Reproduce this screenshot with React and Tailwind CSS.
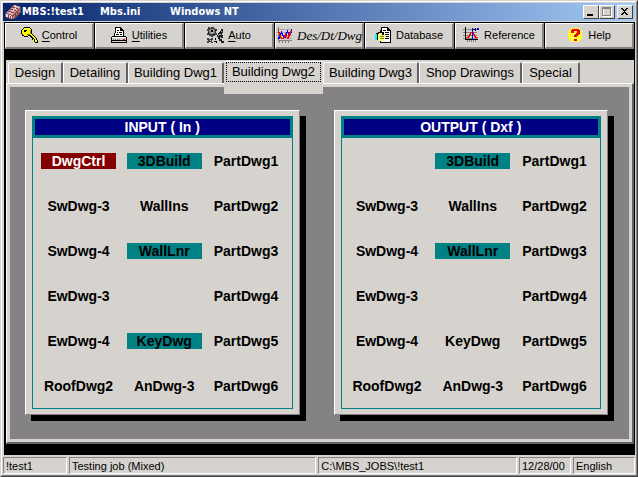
import React from "react";

const face = "bg-[#d6d3ce]";
const raised =
  "border border-t-white border-l-white border-r-[#848284] border-b-[#848284]";

function KeyIcon() {
  return (
    <svg width="17" height="17" viewBox="0 0 17 17" shapeRendering="crispEdges">
      <path d="M3 0h6v1h1v1h1v5l5 5v1h1v3h-3v-1h-1v-2h-2v-2L8 9H7v1H3V9H1V7H0V3h1V2h1V1h1z" fill="#000" />
      <path d="M3 1h6v1h1v5l5 5v1h1v2h-2v-2h-2v-2h-1L8 8H7v1H3V8H2V7H1V3h1V2h1z" fill="#ffff00" />
      <path d="M3 3h3v1H5v1H3zM9 8h1v1h1v1h1v1h1v1h1v1h-1v-1h-1v-1h-1v-1h-1V9H9z" fill="#000" />
      <path d="M9 3h1v4H9zM6 7h3v1H6z" fill="#848200" />
    </svg>
  );
}

function PrinterIcon() {
  return (
    <svg width="17" height="17" viewBox="0 0 17 17" shapeRendering="crispEdges">
      <path d="M4 0h6v1h1v1h1v1h1v6h2v1h1v6H0v-6h1V9h2V6h1z" fill="#000" />
      <path d="M5 1h4v3h3v5H4V6h1zM1 10h14v1H1z" fill="#fff" />
      <path d="M1 11h14v2H1zM1 14h14v1H1z" fill="#d6d3ce" />
      <path d="M2 12h1v1H2zM4 12h1v1H4zM6 12h1v1H6zM8 12h1v1H8z" fill="#848284" />
      <path d="M6 3h2v1H6zM6 5h1v1H6zM8 5h3v1H8zM5 7h3v1H5zM9 7h2v1H9z" fill="#000" />
      <path d="M12 12h2v1h-2z" fill="#f00" />
    </svg>
  );
}

function GearsIcon() {
  return (
    <svg width="17" height="17" viewBox="0 0 17 17" shapeRendering="crispEdges">
      <path d="M1 0h2v1h1V0h3v1h1v1h2v2H9v2h1v2H8v1H6v1H4V9H2V8H0V6h1V4H0V2h1z" fill="#424142" />
      <path d="M3 2h4v1h1v3H7v1H3V6H2V3h1z" fill="#848284" />
      <path d="M3 3h1v1H3zM6 3h1v1H6zM4 5h2v1H4z" fill="#d6d3ce" />
      <path d="M4 3h2v2H4zM1 5h1v1H1zM8 3h1v1H8zM6 7h1v1H6z" fill="#000" />
      <path d="M14 2h2v4h-1v2h1v3h-2v1h1v2h2v2h-3v-2h-2v-2h-1v-2h-1V8h1V6h1V5h1V4h1z" fill="#212021" />
      <path d="M14 4h1v1h-1zM12 7h2v1h-2zM13 10h1v2h-1zM11 8h1v1h-1z" fill="#adaaad" />
      <path d="M0 11h2v1h2v-1h2v2H5v2h1v1H4v-1H2v1H0v-2h1v-1H0z" fill="#424142" />
      <path d="M3 13h1v1H3z" fill="#d6d3ce" />
      <path d="M8 11h1v2H8zM7 14h3v2H9v-1H7z" fill="#000" />
    </svg>
  );
}

function ChartIcon() {
  return (
    <svg width="17" height="17" viewBox="0 0 17 17" shapeRendering="crispEdges">
      <path d="M0 2h16v1H0zM0 5h16v1H0zM0 8h16v1H0zM0 11h16v1H0z" fill="#adaaad" />
      <path d="M2 0h1v13H2zM2 13h14v1H2zM3 14h1v2H3zM6 14h1v2H6zM9 14h1v2H9zM12 14h1v2h-1z" fill="#848284" />
      <path d="M2 10h1V8h1V6h1V4h1v2h1v2h1v1h1V7h1V5h1V3h1v2h1v2h1V5h1V2h1v4h-1v2h-1v1h-1V8h-1V6h-1v3h-1v2H8v-1H7V9H6V7H5v3H4v2H2z" fill="#0000ff" />
      <path d="M2 3h1v2h1v3h1v2h1v1h1v-1h1V8h1V6h1v2h1v2h1V7h1V5h1V4h2v1h-1v2h-1v3h-1v2h-2v-2h-1v-1H9v2H8v1H5v-1H4V9H3V6H2z" fill="#ff0000" />
    </svg>
  );
}

function DatabaseIcon() {
  return (
    <svg width="17" height="17" viewBox="0 0 17 17" shapeRendering="crispEdges">
      <path d="M6 0h7v1h1v1h1v1h1v13H5v-3H1V6h2V5h2V3h1z" fill="#000" />
      <path d="M7 1h5v3h3v11H6v-2h3V5H7z" fill="#fff" />
      <path d="M10 5h4v1h-4zM10 7h4v1h-4zM10 9h4v1h-4zM10 11h4v1h-4zM8 3h3v1H8z" fill="#000" />
      <path d="M3 7h1V6h3v2h4v2H9v4H4v-1H3z" fill="#ffff84" />
      <path d="M5 9h4v1H5zM5 11h4v1H5z" fill="#848200" />
      <path d="M0 7h2v6H0z" fill="#00ffff" />
    </svg>
  );
}

function ReferenceIcon() {
  return (
    <svg width="17" height="17" viewBox="0 0 17 17" shapeRendering="crispEdges">
      <path d="M0 2h14v1H0zM0 5h14v1H0zM0 8h14v1H0zM0 11h14v1H0z" fill="#848284" />
      <path d="M2 0h1v13H2zM2 12h13v1H2z" fill="#000" />
      <path d="M4 13h1v2H4zM6 13h1v2H6zM8 13h1v2H8zM10 13h1v2h-1zM12 13h1v2h-1z" fill="#848284" />
      <path d="M3 10h2V9h1V7h1V5h4v2h1v2h1v1h2v1h-3v-1h-1V8h-1V6H8v2H7v2H6v1H3z" fill="#ff0000" />
      <path d="M9 1h1v11H9z" fill="#0000ff" />
      <path d="M10 2h3v1h-3zM12 1h1v3h-1z" fill="#000" />
      <path d="M14 1h2v2h-2z" fill="#0000ff" />
    </svg>
  );
}

function HelpIcon() {
  return (
    <svg width="17" height="17" viewBox="0 0 17 17" shapeRendering="crispEdges">
      <defs>
        <pattern id="dither" width="2" height="2" patternUnits="userSpaceOnUse">
          <path d="M0 0h2v2H0z" fill="#ffff00" />
          <path d="M0 0h1v1H0z" fill="#ffffbd" />
        </pattern>
      </defs>
      <circle cx="8" cy="8" r="7.5" fill="url(#dither)" />
      <path d="M4 3h1V2h7v1h1v4h-1v1h-1v1h-1v1H7V8h1V7h1V6h1V4H7v2H4zM7 12h3v2H7z" fill="#ff0000" />
      <path d="M7 9h3v1H7zM12 3h1v4h-1z" fill="#b50000" />
    </svg>
  );
}

function BrickIcon() {
  return (
    <svg width="17" height="16" viewBox="0 0 17 16" shapeRendering="crispEdges">
      <path d="M0 9L8 1h3l5 2v5l-7 7H5l-5-2z" fill="#845152" />
      <path d="M1 9l8-8 6 2-8 8z" fill="#ceb2b5" />
      <path d="M1 10l6 2v3l-6-2z" fill="#e7dbde" />
      <path d="M8 12l7-7v3l-7 6z" fill="#ad8284" />
      <path d="M3 7l6 2M5 5l6 2M7 3l6 2M3 11v3M5 12v3M10 10v3M12 8v3" stroke="#9c3039" />
      <path d="M5 8h1v1H5zM8 6h1v1H8zM10 4h1v1h-1zM10 2h1v1h-1z" fill="#efe3e7" />
    </svg>
  );
}

const tools = [
  { icon: KeyIcon, hot: "C", rest: "ontrol" },
  { icon: PrinterIcon, hot: "U", rest: "tilities" },
  { icon: GearsIcon, hot: "A", rest: "uto" },
  { icon: ChartIcon, hot: "", rest: "Des/Dt/Dwg", italic: true },
  { icon: DatabaseIcon, hot: "", rest: "Database" },
  { icon: ReferenceIcon, hot: "", rest: "Reference" },
  { icon: HelpIcon, hot: "", rest: "Help" },
];

const tabs = [
  { label: "Design", width: "w-[55px]" },
  { label: "Detailing", width: "w-[65px]" },
  { label: "Building Dwg1", width: "w-[96px]" },
  { label: "Building Dwg2", width: "w-[99px]", active: true },
  { label: "Building Dwg3", width: "w-[96px]" },
  { label: "Shop Drawings", width: "w-[103px]" },
  { label: "Special", width: "w-[58px]" },
];

const inputCells = [
  ["DwgCtrl", "red"], ["3DBuild", "teal"], ["PartDwg1"],
  ["SwDwg-3"], ["WallIns"], ["PartDwg2"],
  ["SwDwg-4"], ["WallLnr", "teal"], ["PartDwg3"],
  ["EwDwg-3"], [""], ["PartDwg4"],
  ["EwDwg-4"], ["KeyDwg", "teal"], ["PartDwg5"],
  ["RoofDwg2"], ["AnDwg-3"], ["PartDwg6"],
];

const outputCells = [
  [""], ["3DBuild", "teal"], ["PartDwg1"],
  ["SwDwg-3"], ["WallIns"], ["PartDwg2"],
  ["SwDwg-4"], ["WallLnr", "teal"], ["PartDwg3"],
  ["EwDwg-3"], [""], ["PartDwg4"],
  ["EwDwg-4"], ["KeyDwg"], ["PartDwg5"],
  ["RoofDwg2"], ["AnDwg-3"], ["PartDwg6"],
];

const tones = {
  red: "bg-[#840000] text-white",
  teal: "bg-[#008284]",
};

function TitleBar() {
  return (
    <header className="flex h-[18px] items-center bg-linear-to-r from-[#08246b] to-[#a5cbf7] px-[2px] font-['DejaVu_Sans_Condensed','DejaVu_Sans',sans-serif] text-[11px] font-bold text-white">
      <BrickIcon />
      <h1 className="flex flex-1 whitespace-pre">
        <span className="w-[78px]">MBS:!test1</span>
        <span className="w-[70px]">Mbs.ini</span>
        <span>Windows NT</span>
      </h1>
      <div className="flex">
        <CaptionButton label="Minimize">
          <path d="M3 8h6v2H3z" fill="#000" />
        </CaptionButton>
        <CaptionButton label="Maximize" disabled>
          <path d="M3 2h8v8H3z" fill="none" stroke="#fff" transform="translate(.5 .5)" />
          <path d="M2 1h8v8H2zM2 2h8" fill="none" stroke="#848284" transform="translate(.5 .5)" />
        </CaptionButton>
        <span className="w-[2px]" />
        <CaptionButton label="Close">
          <path d="M3 2h2v1h1v1h1V3h1V2h2v1H9v1H8v1H7v1h1v1h1v1h1v1H8V8H7V7H6v1H5v1H3V8h1V7h1V6h1V5H5V4H4V3H3z" fill="#000" />
        </CaptionButton>
      </div>
    </header>
  );
}

function CaptionButton({ label, disabled, children }) {
  return (
    <button
      aria-label={label}
      disabled={disabled}
      className={`${face} h-[14px] w-4 border border-t-white border-r-[#424142] border-b-[#424142] border-l-white`}
    >
      <svg width="14" height="12" viewBox="0 0 14 12" shapeRendering="crispEdges">
        {children}
      </svg>
    </button>
  );
}

function Toolbar() {
  return (
    <nav className="grid grid-cols-7 gap-px bg-black pt-px pr-px pb-[11px] pl-px text-[11px]">
      {tools.map(({ icon: Icon, hot, rest, italic }) => (
        <button
          key={rest}
          className={`${face} ${raised} flex h-[26px] items-center justify-center gap-1 border-r-2 border-b-2 whitespace-nowrap`}
        >
          <Icon />
          <span className={italic ? "font-['Liberation_Serif',serif] text-[13px] italic" : ""}>
            <span className="underline underline-offset-2">{hot}</span>
            {rest}
          </span>
        </button>
      ))}
    </nav>
  );
}

function Tabs() {
  return (
    <div role="tablist" className={`${face} flex h-[23px] pt-[2px] pl-[2px] text-[13px]`}>
      {tabs.map(({ label, width, active }) => (
        <button
          key={label}
          role="tab"
          aria-selected={!!active}
          className={
            active
              ? `${face} ${width} relative z-10 -mt-px h-[33px] border-t border-white px-[2px] pb-3`
              : `${face} ${width} h-[21px] rounded-t-[2px] border-t border-r-2 border-l border-t-white border-r-[#636163] border-l-white whitespace-nowrap`
          }
        >
          {active ? (
            <span className="flex h-5 items-center justify-center border border-dotted border-black whitespace-nowrap">
              {label}
            </span>
          ) : (
            label
          )}
        </button>
      ))}
    </div>
  );
}

function Panel({ title, cells }) {
  return (
    <section
      className={`${face} ${raised} flex-1 px-[6px] py-[5px] shadow-[6px_6px_0_0_#000]`}
    >
      <div className="border border-[#008284]">
        <h2 className="-m-px h-[22px] border-3 border-[#008284] bg-[#000084] text-center text-[14px] leading-4 font-bold text-white">
          {title}
        </h2>
        <div className="grid grid-cols-[86fr_82fr_75fr] gap-y-[29px] px-2 pt-4 pb-[14px]">
          {cells.map(([label, tone], i) => (
            <div key={i} className="h-4">
              {label && (
                <button
                  className={`block h-4 w-[75px] text-center text-[14px] leading-4 font-bold ${tone ? tones[tone] : ""}`}
                >
                  {label}
                </button>
              )}
            </div>
          ))}
        </div>
      </div>
    </section>
  );
}

function StatusCell({ children, className }) {
  return (
    <span
      className={`${className} h-[17px] truncate border border-t-[#848284] border-r-white border-b-white border-l-[#848284] pl-[2px] leading-4`}
    >
      {children}
    </span>
  );
}

function StatusBar() {
  return (
    <footer className={`${face} -ml-px flex gap-[2px] pt-[2px] text-[11px]`}>
      <StatusCell className="w-16">!test1</StatusCell>
      <StatusCell className="flex-5">Testing job (Mixed)</StatusCell>
      <StatusCell className="flex-4">C:\MBS_JOBS\!test1</StatusCell>
      <StatusCell className="w-[52px]">12/28/00</StatusCell>
      <StatusCell className="w-[62px]">English</StatusCell>
    </footer>
  );
}

export default function App() {
  return (
    <div className={`${face} border border-t-[#d6d3ce] border-r-[#424142] border-b-[#424142] border-l-[#d6d3ce] font-['Liberation_Sans',sans-serif] text-black`}>
      <div className="border border-t-white border-r-[#848284] border-b-[#848284] border-l-white p-px">
        <TitleBar />
        <div className="mt-px ml-px bg-black">
          <Toolbar />
          <div className="pr-px pb-[11px] pl-[2px]">
            <Tabs />
            <main className="border-t border-r-2 border-b-2 border-l border-t-white border-r-[#636163] border-b-[#636163] border-l-white">
              <div className="flex gap-[34px] border-3 border-[#d6d3ce] bg-[#848284] pt-[23px] pr-[21px] pb-6 pl-[15px]">
                <Panel title="INPUT ( In )" cells={inputCells} />
                <Panel title="OUTPUT ( Dxf )" cells={outputCells} />
              </div>
            </main>
          </div>
          <StatusBar />
        </div>
      </div>
    </div>
  );
}
